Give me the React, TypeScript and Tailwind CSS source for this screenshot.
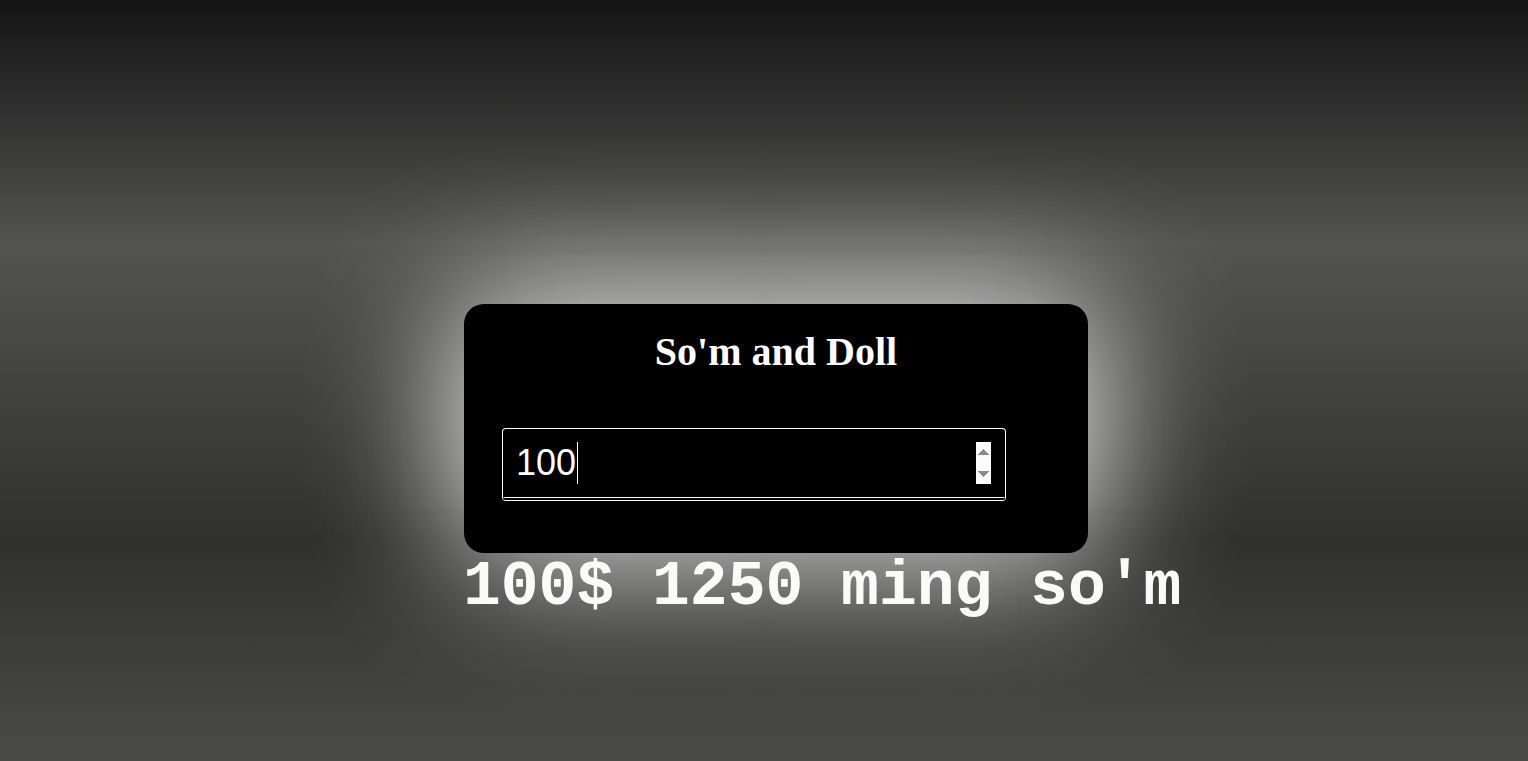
import React, { useState } from 'react';

const RATE = 12.5;

const App: React.FC = () => {
  const [value, setValue] = useState('100');

  const som = Number(value || 0) * RATE;

  return (
    <div className="h-[761px] w-full overflow-hidden bg-[linear-gradient(to_bottom,#141414_0%,#535352_32%,#30302f_71%,#4a4a49_100%)] font-['Liberation_Serif',serif]">
      <div className="flex justify-center pt-[304px]">
        <div className="ml-6 flex w-[624px] flex-col">
          {/* Card */}
          <div className="h-[249px] rounded-[20px] bg-black pt-[25px] pl-[38px] shadow-[0_0_140px_6px_rgba(255,255,255,0.95)]">
            <h1 className="-ml-[38px] text-center text-[40px] font-bold leading-[46px] text-white">
              So'm and Doll
            </h1>
            <div className="relative mt-[53px] w-[504px]">
              <input
                type="number"
                autoFocus
                value={value}
                onChange={(e) => setValue(e.target.value)}
                className="h-[73px] w-full rounded-[4px] border border-b-4 border-double border-white bg-black py-[13px] pr-[14px] pl-[13px] font-['Liberation_Sans',Arial,sans-serif] text-[36px] text-white caret-white outline-none [&::-webkit-inner-spin-button]:opacity-100"
              />
              {/* caret */}
              <span className="pointer-events-none absolute top-[14px] left-[75px] h-[42px] w-px bg-white" />
            </div>
          </div>

          {/* Result */}
          <p className="-ml-px whitespace-nowrap font-['Liberation_Mono','Courier_New',monospace] text-[63px] font-bold leading-[70px] text-[#fafaf6]">
            {value}$ {som} ming so'm
          </p>
        </div>
      </div>
    </div>
  );
};

export default App;
